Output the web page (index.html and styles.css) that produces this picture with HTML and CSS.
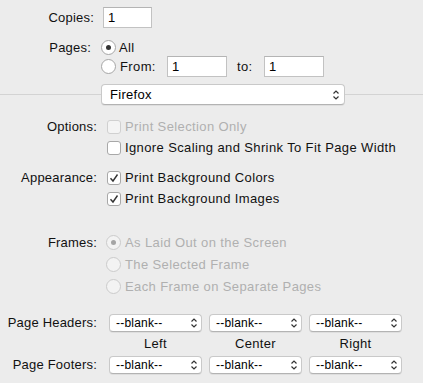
FILE: index.html
```html
<!DOCTYPE html>
<html>
<head>
<meta charset="utf-8">
<title>Print</title>
<link rel="stylesheet" href="styles.css">
</head>
<body>
<div class="top">
    <div class="row copies">
        <span class="lbl">Copies:</span>
        <span class="field">1</span>
    </div>
    <div class="row pages">
        <span class="lbl">Pages:</span>
        <span class="radio on"></span>
        <span class="txt">All</span>
    </div>
    <div class="row range">
        <span class="radio"></span>
        <span class="txt from">From:</span>
        <span class="field wide">1</span>
        <span class="txt to">to:</span>
        <span class="field wide">1</span>
    </div>
</div>

<div class="sep">
    <div class="line first"></div>
    <div class="popup big">
        <span>Firefox</span>
        <svg class="chev" width="8" height="12" viewBox="0 0 8 12"><path d="M1.5 4.5L4 2l2.5 2.5M1.5 7.5L4 10l2.5-2.5" fill="none" stroke="#333" stroke-width="1.2"/></svg>
    </div>
    <div class="line"></div>
</div>

<div class="lower">
    <div class="row opt">
        <span class="lbl">Options:</span>
        <span class="cb off"></span>
        <span class="txt dim">Print Selection Only</span>
    </div>
    <div class="row sub">
        <span class="cb"></span>
        <span class="txt">Ignore Scaling and Shrink To Fit Page Width</span>
    </div>

    <div class="row opt appear">
        <span class="lbl">Appearance:</span>
        <span class="cb"><svg width="12" height="12" viewBox="0 0 12 12"><path d="M2.5 6.2L5 9l4.5-6.5" fill="none" stroke="#333" stroke-width="1.4"/></svg></span>
        <span class="txt">Print Background Colors</span>
    </div>
    <div class="row sub">
        <span class="cb"><svg width="12" height="12" viewBox="0 0 12 12"><path d="M2.5 6.2L5 9l4.5-6.5" fill="none" stroke="#333" stroke-width="1.4"/></svg></span>
        <span class="txt">Print Background Images</span>
    </div>

    <div class="row fr frames">
        <span class="lbl">Frames:</span>
        <span class="radio off on"></span>
        <span class="txt dim">As Laid Out on the Screen</span>
    </div>
    <div class="row fr sub">
        <span class="radio off"></span>
        <span class="txt dim">The Selected Frame</span>
    </div>
    <div class="row fr sub">
        <span class="radio off"></span>
        <span class="txt dim">Each Frame on Separate Pages</span>
    </div>

    <div class="row hf headers">
        <span class="lbl">Page Headers:</span>
        <div class="popup sm"><span>--blank--</span><svg class="chev" width="8" height="12" viewBox="0 0 8 12"><path d="M1.5 4.5L4 2l2.5 2.5M1.5 7.5L4 10l2.5-2.5" fill="none" stroke="#333" stroke-width="1.2"/></svg></div>
        <div class="popup sm"><span>--blank--</span><svg class="chev" width="8" height="12" viewBox="0 0 8 12"><path d="M1.5 4.5L4 2l2.5 2.5M1.5 7.5L4 10l2.5-2.5" fill="none" stroke="#333" stroke-width="1.2"/></svg></div>
        <div class="popup sm"><span>--blank--</span><svg class="chev" width="8" height="12" viewBox="0 0 8 12"><path d="M1.5 4.5L4 2l2.5 2.5M1.5 7.5L4 10l2.5-2.5" fill="none" stroke="#333" stroke-width="1.2"/></svg></div>
    </div>
    <div class="row cols">
        <span>Left</span>
        <span>Center</span>
        <span>Right</span>
    </div>
    <div class="row hf">
        <span class="lbl">Page Footers:</span>
        <div class="popup sm"><span>--blank--</span><svg class="chev" width="8" height="12" viewBox="0 0 8 12"><path d="M1.5 4.5L4 2l2.5 2.5M1.5 7.5L4 10l2.5-2.5" fill="none" stroke="#333" stroke-width="1.2"/></svg></div>
        <div class="popup sm"><span>--blank--</span><svg class="chev" width="8" height="12" viewBox="0 0 8 12"><path d="M1.5 4.5L4 2l2.5 2.5M1.5 7.5L4 10l2.5-2.5" fill="none" stroke="#333" stroke-width="1.2"/></svg></div>
        <div class="popup sm"><span>--blank--</span><svg class="chev" width="8" height="12" viewBox="0 0 8 12"><path d="M1.5 4.5L4 2l2.5 2.5M1.5 7.5L4 10l2.5-2.5" fill="none" stroke="#333" stroke-width="1.2"/></svg></div>
    </div>
</div>
</body>
</html>
```

FILE: styles.css
```css
*{ margin:0; padding:0; box-sizing:border-box;}
body{ background:#ececec; font-family:"Liberation Sans", Arial, sans-serif; font-size:13px; color:#111; width:423px; height:383px; overflow:hidden;}

.row{ display:flex; align-items:center;}
.lbl{ flex:none; text-align:right; letter-spacing:0.2px;}
.txt{ white-space:nowrap; letter-spacing:0.38px;}
.dim{ color:#b0b0b0;}

/* copies / pages */
.top{ padding-top:7px;}
.copies{ height:21px;}
.top .lbl{ width:94px; margin-right:9px;}
.pages{ height:17px; margin-top:11px;}
.pages .lbl{ width:91px; margin-right:10px;}
.pages .txt{ margin-left:3px;}
.range{ height:21px; padding-left:101px;}
.range .from{ width:51px; padding-left:4px;}
.range .to{ width:37px; padding-left:10px;}

.field{ display:block; width:49px; height:21px; background:#fff; border:1px solid #c2c2c2; border-top-color:#b4b4b4; padding-left:4px; line-height:19px; color:#000;}
.field.wide{ width:60px;}

.radio{ flex:none; width:15px; height:15px; border-radius:50%; background:#fff; border:1px solid #a6a6a6; position:relative;}
.radio.on:after{ content:""; position:absolute; left:4px; top:4px; width:5px; height:5px; border-radius:50%; background:#333;}
.radio.off{ background:#f3f3f3; border-color:#cbcbcb;}
.radio.off.on:after{ background:#a5a5a5;}

/* firefox popup over the separator */
.sep{ display:flex; align-items:center; margin-top:7px; height:21px;}
.line{ flex:1; height:1px; background:#d3d3d3;}
.line.first{ flex:none; width:101px;}

.popup{ display:flex; align-items:center; justify-content:space-between; background:#fff; border:1px solid #c9c9c9; border-bottom-color:#b3b3b3; border-radius:4px; box-shadow:0 1px 0 rgba(0,0,0,0.06); color:#000;}
.popup.big{ width:244px; height:21px; padding:0 4px 0 8px; letter-spacing:0.3px;}
.popup.sm{ flex:none; width:93px; height:18px; margin-right:7px; padding:0 3px 0 6px; font-size:12px; letter-spacing:0.2px;}
.chev{ display:block;}

/* options */
.lower{ margin-top:11px;}
.lower .lbl{ width:97px; margin-right:10px;}
.opt{ height:21px;}
.sub{ height:21px; padding-left:107px;}
.appear{ margin-top:9px;}

.cb{ flex:none; width:14px; height:14px; border:1px solid #a8a8a8; border-radius:3px; background:#fff; margin-right:4px; display:flex; align-items:center; justify-content:center;}
.cb.off{ background:#f4f4f4; border-color:#d0d0d0;}

.fr{ height:22px;}
.fr .radio{ margin-left:-1px; margin-right:4px;}
.frames{ margin-top:22px;}
.fr.sub{ padding-left:107px;}

.hf{ height:19px;}
.hf .lbl{ margin-right:12px;}
.headers{ margin-top:16px;}
.cols{ height:23px; padding-left:109px; letter-spacing:0.3px;}
.cols span{ width:93px; margin-right:7px; text-align:center;}
```
